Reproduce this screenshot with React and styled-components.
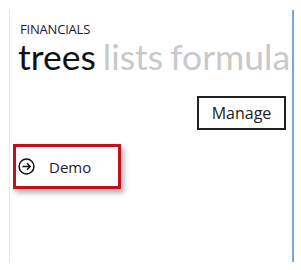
import React from 'react'
import styled, { createGlobalStyle } from 'styled-components'

const GlobalStyle = createGlobalStyle`
  html, body {
    margin: 0;
    padding: 0;
    background: #fff;
  }
  body {
    font-family: "Open Sans", "Liberation Sans", sans-serif;
    color: #1e1e1e;
  }
`

const Page = styled.div`
  width: 301px;
  height: 270px;
  padding: 10px 7px 8px 9px;
  box-sizing: border-box;
`

const Panel = styled.div`
  height: 100%;
  border-left: 1px solid #dde7f3;
  border-right: 2px solid #7fa5d6;
  box-sizing: border-box;
  display: flex;
  flex-direction: column;
  overflow: hidden;
`

const Header = styled.header`
  padding: 11px 0 0 10px;
`

const Caption = styled.div`
  font-size: 13px;
  line-height: 16px;
  color: #1a1a2e;
  letter-spacing: -0.2px;
`

const Pivot = styled.div`
  display: flex;
  gap: 7px;
  white-space: nowrap;
  font-family: Lato, "Open Sans", sans-serif;
  font-size: 35.5px;
  line-height: 40px;
  margin-left: -2px;
`

const PivotItem = styled.span`
  color: ${p => (p.$active ? '#111' : '#c9c9c9')};
`

const Toolbar = styled.div`
  display: flex;
  justify-content: flex-end;
  padding: 19px 6px 0 0;
`

const Button = styled.button`
  font-family: "Open Sans", sans-serif;
  font-size: 16px;
  color: #222;
  background: #fff;
  border: 2px solid #222;
  width: 89px;
  height: 34px;
  padding: 0;
`

const Tiles = styled.div`
  padding: 14px 0 0 3px;
`

const Tile = styled.div`
  width: 108px;
  height: 45px;
  box-sizing: border-box;
  border: 3px solid #c0101b;
  box-shadow: 3px 4px 5px rgba(0, 0, 0, 0.3);
  display: flex;
  align-items: center;
  gap: 14px;
  padding: 0 0 0 2px;
  font-size: 15px;
  color: #1a1a2e;
`

const ArrowCircle = () => (
  <svg width="17" height="17" viewBox="0 0 16 16" fill="none" stroke="#111" strokeWidth="1.4">
    <circle cx="8" cy="8" r="7" />
    <path d="M4.2 8H11.4" />
    <path d="M8.5 5L11.4 8L8.5 11" />
  </svg>
)

const App = () => (
  <>
    <GlobalStyle />
    <Page>
      <Panel>
        <Header>
          <Caption>FINANCIALS</Caption>
          <Pivot>
            <PivotItem $active>trees</PivotItem>
            <PivotItem>lists</PivotItem>
            <PivotItem>formula</PivotItem>
          </Pivot>
        </Header>
        <Toolbar>
          <Button>Manage</Button>
        </Toolbar>
        <Tiles>
          <Tile>
            <ArrowCircle />
            <span>Demo</span>
          </Tile>
        </Tiles>
      </Panel>
    </Page>
  </>
)

export default App
